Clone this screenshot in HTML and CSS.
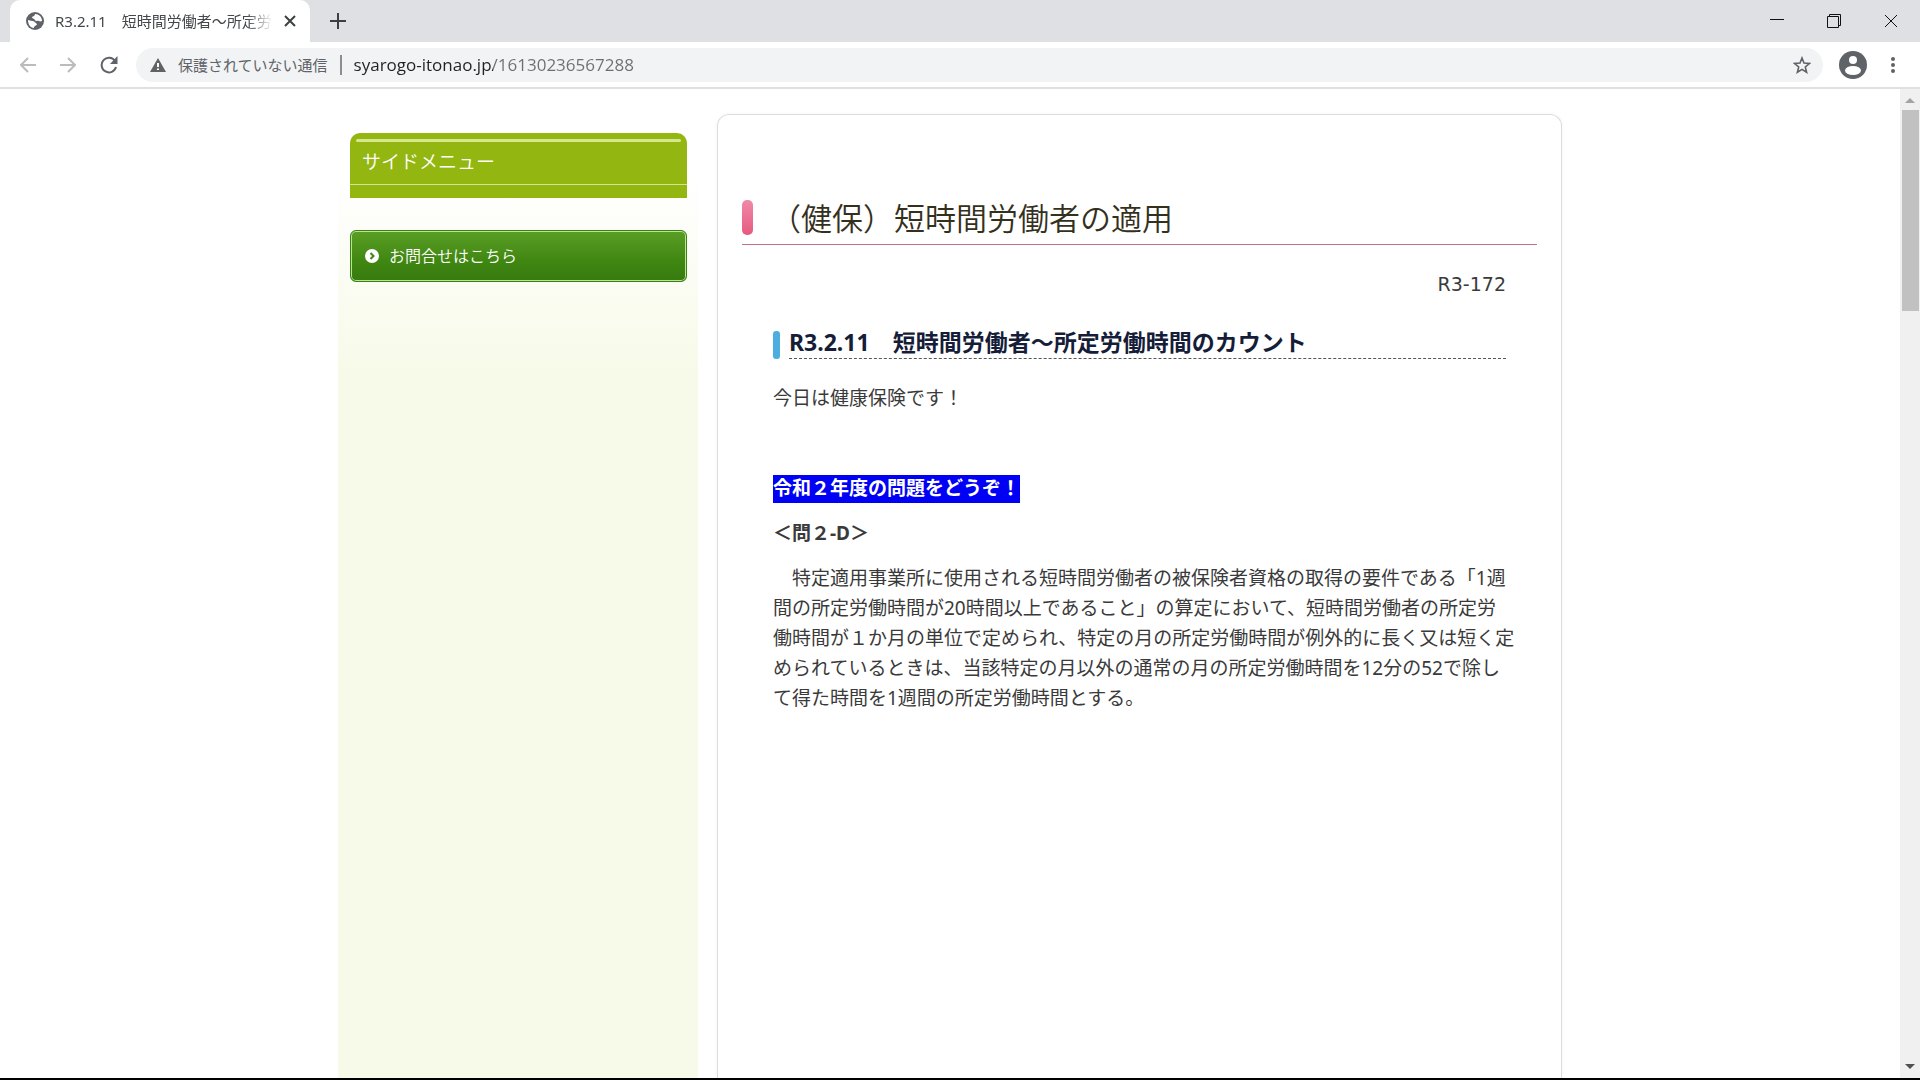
FILE: index.html
```html
<!DOCTYPE html>
<html lang="ja">
<head>
	<meta charset="UTF-8">
	<meta name="viewport" content="width=device-width, initial-scale=1.0">
	<title>R3.2.11　短時間労働者～所定労働時間のカウント</title>
	<link rel="stylesheet" href="styles.css">
</head>
<body>
	<header class="browser">
		<div class="tabs">
			<div class="tab">
				<svg class="tab__icon" width="18" height="18" viewBox="0 0 18 18">
					<circle cx="9" cy="9" r="9" fill="#5f6368"/>
					<path d="M9 2 C9 4 7 4 6 5 C6 7 8 6 9 8 C10 10 12 8 13 9 C14 10 16 9 16 9 C16 5 13 2 9 2Z" fill="#fff"/>
					<path d="M2 8 L6 9 C9 9 9 11 11 12 C11 14 8 13 8 16 C4 16 2 12 2 8Z" fill="#fff"/>
				</svg>
				<span class="tab__title">R3.2.11　短時間労働者～所定労働</span>
				<button class="btn" aria-label="閉じる">
					<svg width="12" height="12" viewBox="0 0 12 12"><path d="M1 1L11 11M11 1L1 11" stroke="#3c4043" stroke-width="2"/></svg>
				</button>
			</div>
			<button class="btn tabs__new" aria-label="新しいタブ">
				<svg width="16" height="16" viewBox="0 0 16 16"><path d="M8 0V16M0 8H16" stroke="#3c4043" stroke-width="2"/></svg>
			</button>
			<div class="window">
				<button class="btn" aria-label="最小化">
					<svg width="14" height="14" viewBox="0 0 14 14"><path d="M0 5.500H14" stroke="#111"/></svg>
				</button>
				<button class="btn" aria-label="元に戻す">
					<svg width="14" height="14" viewBox="0 0 14 14" fill="none" stroke="#111"><path d="M.5 2.500H11.500V13.500H.5ZM2.500 2.500V.5H13.500V11.500H11.500"/></svg>
				</button>
				<button class="btn" aria-label="ウィンドウを閉じる">
					<svg width="14" height="14" viewBox="0 0 14 14"><path d="M1 1L13 13M13 1L1 13" stroke="#111"/></svg>
				</button>
			</div>
		</div>
		<div class="toolbar">
			<button class="btn" aria-label="戻る">
				<svg width="16" height="16" viewBox="0 0 16 16" fill="none" stroke="#babcbe" stroke-width="2"><path d="M16 8H1M8 1L1 8L8 15"/></svg>
			</button>
			<button class="btn" aria-label="進む">
				<svg width="16" height="16" viewBox="0 0 16 16" fill="none" stroke="#babcbe" stroke-width="2"><path d="M0 8H15M8 1L15 8L8 15"/></svg>
			</button>
			<button class="btn" aria-label="再読み込み">
				<svg width="18" height="18" viewBox="0 0 18 18"><path d="M15 5A7.300 7.300 0 1 0 16 11" fill="none" stroke="#5f6368" stroke-width="2"/><path d="M17.500 0V8H10Z" fill="#5f6368"/></svg>
			</button>
			<div class="address">
				<svg width="16" height="14" viewBox="0 0 16 14"><path d="M8 0L16 14H0Z" fill="#5f6368"/><path d="M8 5V9M8 10.500V12" stroke="#fff" stroke-width="2"/></svg>
				<label class="address__label" for="url">保護されていない通信</label>
				<input class="address__url" id="url" type="text" value="syarogo-itonao.jp/16130236567288">
				<button class="btn" aria-label="ブックマーク">
					<svg width="18" height="18" viewBox="0 0 18 18"><path d="M9 2L11 7L16.500 7.400L12.300 11L13.600 16.300L9 13.400L4.400 16.300L5.700 11L1.500 7.400L7 7Z" fill="none" stroke="#5f6368" stroke-width="1.600"/></svg>
				</button>
			</div>
			<button class="btn" aria-label="プロフィール">
				<svg width="28" height="28" viewBox="0 0 28 28"><circle cx="14" cy="14" r="14" fill="#5f6368"/><circle cx="14" cy="9" r="4" fill="#fff"/><ellipse cx="14" cy="19.500" rx="8" ry="4.500" fill="#fff"/></svg>
			</button>
			<button class="btn" aria-label="メニュー">
				<svg width="4" height="16" viewBox="0 0 4 16" fill="#5f6368"><circle cx="2" cy="2" r="2"/><circle cx="2" cy="8" r="2"/><circle cx="2" cy="14" r="2"/></svg>
			</button>
		</div>
	</header>

	<div class="view">
		<div class="page">
			<aside class="side">
				<h2 class="side__title">サイドメニュー</h2>
				<a class="side__link" href="#">
					<svg width="14" height="14" viewBox="0 0 14 14"><circle cx="7" cy="7" r="7" fill="#fff"/><path d="M5.500 4L8.500 7L5.500 10" fill="none" stroke="#3f8518" stroke-width="2"/></svg>
					お問合せはこちら
				</a>
			</aside>
			<main class="main">
				<h1 class="main__title">（健保）短時間労働者の適用</h1>
				<article class="article">
					<p class="article__number">R3-172</p>
					<div class="article__head">
						<h2 class="article__title">R3.2.11　短時間労働者～所定労働時間のカウント</h2>
					</div>
					<p>今日は健康保険です！</p>
					<p>&nbsp;</p>
					<p><strong class="mark">令和２年度の問題をどうぞ！</strong></p>
					<p><strong>＜問２-D＞</strong></p>
					<p>　特定適用事業所に使用される短時間労働者の被保険者資格の取得の要件である「1週<br>間の所定労働時間が20時間以上であること」の算定において、短時間労働者の所定労<br>働時間が１か月の単位で定められ、特定の月の所定労働時間が例外的に長く又は短く定<br>められているときは、当該特定の月以外の通常の月の所定労働時間を12分の52で除し<br>て得た時間を1週間の所定労働時間とする。</p>
				</article>
			</main>
		</div>
		<div class="scroll">
			<svg width="10" height="5" viewBox="0 0 10 5"><path d="M0 5L5 0L10 5Z" fill="#a3a3a3"/></svg>
			<div class="scroll__thumb"></div>
			<svg width="10" height="5" viewBox="0 0 10 5"><path d="M0 0L5 5L10 0Z" fill="#505050"/></svg>
		</div>
	</div>
</body>
</html>
```
FILE: styles.css
```css
*{
	box-sizing: border-box;
	margin: 0;
	padding: 0;
}
body{
	display: flex;
	flex-direction: column;
	height: 100vh;
	border-bottom: 2px solid black;
	background: white;
	color: #3a3a3a;
	font-family: "Noto Sans", "Noto Sans CJK JP", sans-serif;
	font-size: 19px;
	line-height: 30px;
	overflow: hidden;
}
svg{
	display: block;
	flex: none;
}
.btn{
	border: 0;
	background: none;
	cursor: pointer;
}

/* browser bar */
.browser{
	flex: none;
	border-bottom: 2px solid #dfe0e2;
}
.tabs{
	display: flex;
	align-items: center;
	height: 42px;
	padding-left: 10px;
	background: #dee0e4;
}
.tab{
	display: flex;
	align-items: center;
	width: 300px;
	height: 42px;
	padding: 0 14px 0 16px;
	gap: 11px;
	background: white;
	border-radius: 10px 10px 0 0;
}
.tab__title{
	flex: 1;
	overflow: hidden;
	white-space: nowrap;
	color: #45484b;
	font-size: 15px;
	-webkit-mask-image: linear-gradient(90deg, black 88%, transparent);
	mask-image: linear-gradient(90deg, black 88%, transparent);
}
.tabs__new{
	margin-left: 20px;
}
.window{
	display: flex;
	gap: 43px;
	margin-left: auto;
	padding-right: 22px;
}
.toolbar{
	display: flex;
	align-items: center;
	gap: 24px;
	height: 45px;
	padding: 0 25px 0 20px;
}
.address{
	display: flex;
	align-items: center;
	flex: 1;
	height: 34px;
	padding: 0 12px 0 14px;
	margin: 0 -8px 0 -6px;
	gap: 12px;
	background: #f1f3f4;
	border-radius: 17px;
}
.address__label{
	padding-right: 12px;
	border-right: 2px solid #8a8d91;
	color: #5f6368;
	font-size: 15px;
	line-height: 20px;
}
/* host name dark, path grey */
.address__url{
	flex: 1;
	border: 0;
	outline: 0;
	background: linear-gradient(90deg, #202124 139px, #6b6f74 139px);
	-webkit-background-clip: text;
	background-clip: text;
	color: transparent;
	font-family: "Open Sans", sans-serif;
	font-size: 17px;
}

.view{
	display: flex;
	flex: 1;
	min-height: 0;
}
.page{
	display: flex;
	flex: 1;
	gap: 19px;
	max-width: 1224px;
	margin: 0 auto;
}

/* side menu */
.side{
	flex: none;
	width: 360px;
	padding: 44px 11px 0 12px;
	background: linear-gradient(white 80px, #f7fae8 290px);
}
.side__title{
	height: 65px;
	padding: 0 12px;
	margin-bottom: 32px;
	background: linear-gradient(transparent 45px, #d3e392 45px, #d3e392 46px, transparent 46px), #94b611;
	border-radius: 10px 10px 0 0;
	border-top: 6px solid #94b611;
	color: white;
	font-size: 19px;
	font-weight: 350;
	line-height: 40px;
}
.side__title::before{
	content: "";
	display: block;
	height: 3px;
	margin: 0 -6px;
	border-radius: 2px;
	background: #d6e68e;
}
.side__link{
	display: flex;
	align-items: center;
	gap: 10px;
	height: 52px;
	padding: 0 14px;
	border: 1px solid #3e7f18;
	border-radius: 6px;
	background: linear-gradient(#5a9e24, #408712 60%, #377a10);
	box-shadow: inset 0 0 0 1px #b5e78c;
	color: white;
	font-size: 16px;
	font-weight: 350;
	text-decoration: none;
}

/* content */
.main{
	flex: 1;
	min-width: 0;
	padding: 69px 24px 0;
	margin-top: 25px;
	border: 1px solid #dcdcdc;
	border-bottom: 0;
	border-radius: 12px 12px 0 0;
	box-shadow: 0 0 4px #f5f5f5;
}
.main__title{
	position: relative;
	height: 61px;
	padding-left: 28px;
	border-bottom: 1px solid #c0708a;
	color: #35301c;
	font-size: 31px;
	font-weight: 350;
	line-height: 68px;
}
.main__title::before{
	content: "";
	position: absolute;
	left: 0;
	bottom: 9px;
	width: 11px;
	height: 35px;
	border-radius: 5px;
	background: linear-gradient(#ef8aa8, #e65a80);
}
.article{
	padding: 24px 31px 0;
}
.article p{
	margin-bottom: 15px;
	white-space: nowrap;
}
.article .article__number{
	margin-bottom: 27px;
	font-family: "DejaVu Sans", sans-serif;
	text-align: right;
}
.article__head{
	display: flex;
	gap: 9px;
	margin-bottom: 24px;
}
.article__head::before{
	content: "";
	width: 7px;
	margin-top: 5px;
	border-radius: 3px;
	background: #4caee0;
}
.article__title{
	flex: 1;
	border-bottom: 1px dashed #555;
	color: #151d38;
	font-size: 23px;
	line-height: 32px;
}
.mark{
	padding-bottom: 2px;
	background: #0000f4;
	color: white;
}

.scroll{
	display: flex;
	flex-direction: column;
	align-items: center;
	width: 20px;
	padding: 9px 0;
	background: #f0f0f0;
}
.scroll__thumb{
	width: 17px;
	height: 201px;
	margin: 7px 0 auto;
	background: #c1c1c1;
}
```
